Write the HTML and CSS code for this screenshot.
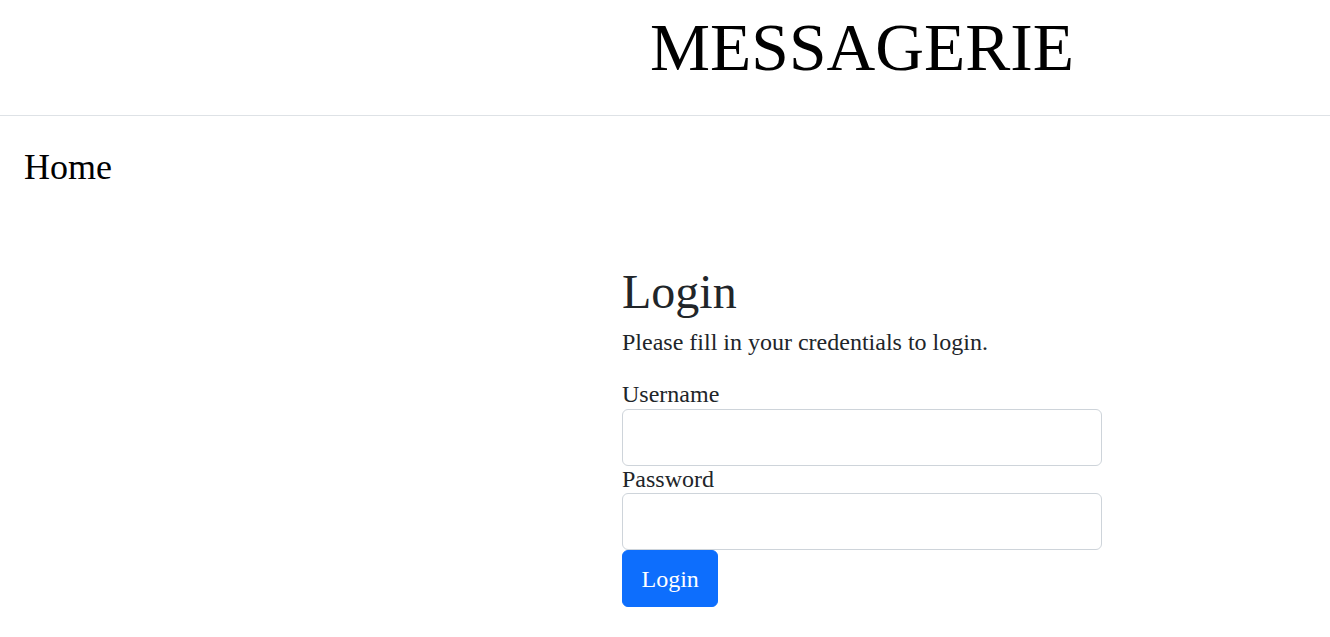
FILE: index.html
```html
<!DOCTYPE html>
<html lang="fr">
<head>
<meta charset="utf-8">
<title>Messagerie</title>
<link rel="stylesheet" href="styles.css">
</head>
<body>
<header class="site-header">
  <h1 class="site-title">MESSAGERIE</h1>
</header>
<nav class="site-nav">
  <a class="nav-link" href="#">Home</a>
</nav>
<main class="page-main">
  <div class="wrapper">
    <h2 class="login-title">Login</h2>
    <p class="login-intro">Please fill in your credentials to login.</p>
    <form class="login-form">
      <div class="form-group">
        <label class="form-label" for="username">Username</label>
        <input class="form-control" type="text" id="username" name="username">
      </div>
      <div class="form-group">
        <label class="form-label" for="password">Password</label>
        <input class="form-control" type="password" id="password" name="password">
      </div>
      <div class="form-group">
        <button class="btn-primary" type="submit">Login</button>
      </div>
    </form>
  </div>
</main>
</body>
</html>
```

FILE: styles.css
```css
html, body {
  margin: 0;
  padding: 0;
  background: #ffffff;
  overflow: hidden;
}

body {
  font-family: "Liberation Serif", "Times New Roman", serif;
  color: #212529;
}

.site-header {
  padding: 9px 0 28px 394px;
  border-bottom: 1px solid #dee2e6;
  text-align: center;
}

.site-title {
  margin: 0;
  font-size: 67.5px;
  line-height: 78px;
  font-weight: normal;
  color: #000000;
}

.site-nav {
  padding: 30px 0 0 24px;
}

.nav-link {
  display: block;
  font-size: 36px;
  line-height: 42px;
  color: #000000;
  text-decoration: none;
}

.page-main {
  padding-left: 394px;
  margin-top: 46px;
}

.wrapper {
  width: 480px;
  padding: 30px 30px 0;
  margin: 0 auto;
}

.login-title {
  margin: 0 0 9px;
  font-size: 48px;
  line-height: 56px;
  font-weight: normal;
}

.login-intro {
  margin: 0 0 24.5px;
  font-size: 24px;
  line-height: 27.6px;
}

.login-form {
  margin: 0;
}

.form-group {
  display: flex;
  flex-direction: column;
  align-items: flex-start;
}

.form-label {
  font-size: 24px;
  line-height: 27.6px;
}

.form-control {
  box-sizing: border-box;
  width: 100%;
  height: 57px;
  margin: 0;
  padding: 0 18px;
  border: 1px solid #ced4da;
  border-radius: 6px;
  background: #ffffff;
  font-family: inherit;
  font-size: 24px;
  color: #212529;
}

.btn-primary {
  box-sizing: border-box;
  height: 57px;
  margin: 0;
  padding: 0 18.5px;
  border: 1px solid #0d6efd;
  border-radius: 6px;
  background: #0d6efd;
  color: #ffffff;
  font-family: inherit;
  font-size: 24px;
  line-height: 1;
  cursor: pointer;
}
```
